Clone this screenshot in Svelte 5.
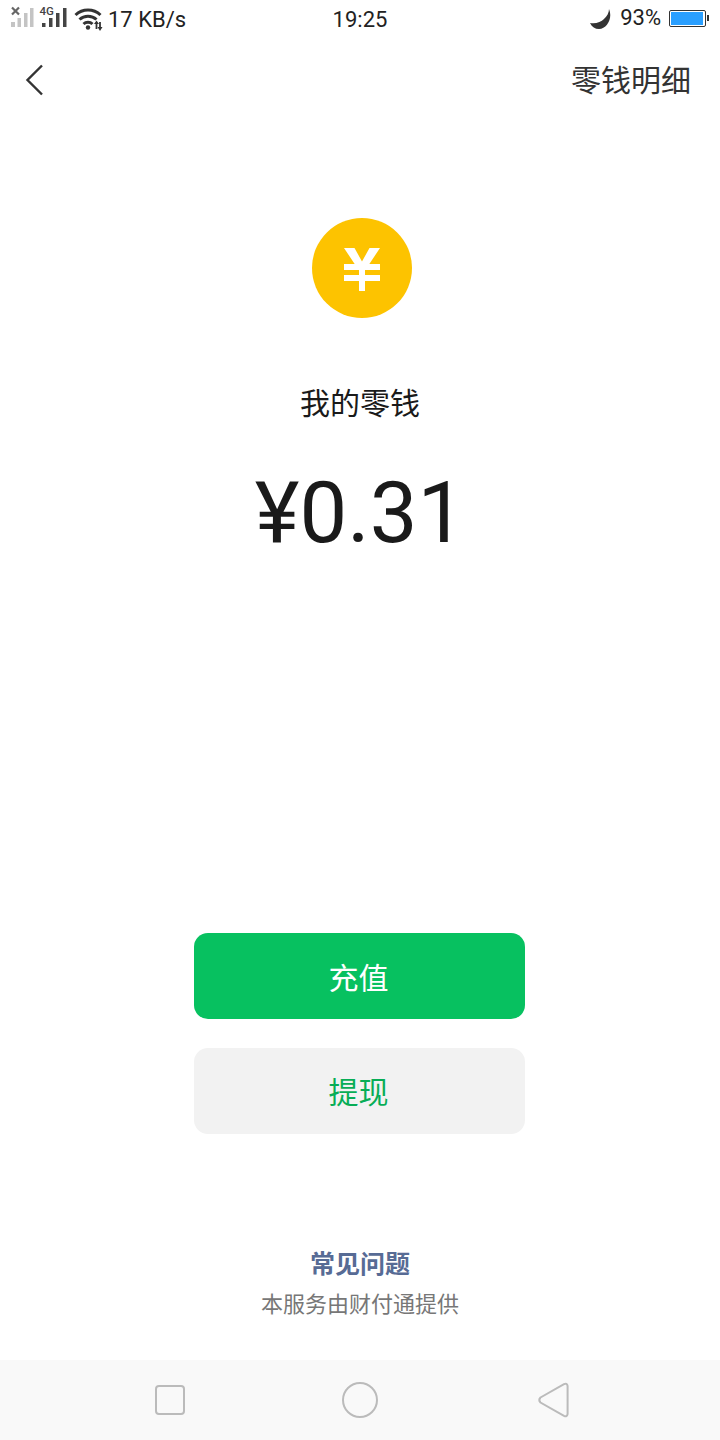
<script lang="ts">
  const faqLabel = "常见问题";
  const provider = "本服务由财付通提供";
</script>

<div class="page">
  <div class="status">
    <div class="status-left">
      <!-- sim 1 (no service), sim 2 (4G), wifi -->
      <svg class="signal" width="95" height="32" viewBox="0 0 95 32">
        <path d="M1 3.500l7 7M8 3.500l-7 7" stroke="#666" stroke-width="2.200" fill="none" />
        <g fill="#c4c4c4">
          <rect x="0" y="18" width="4" height="5" />
          <rect x="6.500" y="14" width="3.500" height="9" />
          <rect x="13" y="9" width="3.500" height="14" />
          <rect x="19" y="4" width="3.500" height="19" />
        </g>
        <text x="28.500" y="11" class="g4">4G</text>
        <g fill="#444">
          <rect x="31" y="19" width="3.500" height="4" />
          <rect x="38" y="14" width="3.500" height="9" />
          <rect x="45" y="9" width="3.500" height="14" />
          <rect x="52" y="4" width="3.500" height="19" />
        </g>
        <g fill="none" stroke="#333" stroke-width="3">
          <path d="M64.500 11a18 18 0 0 1 25 0" />
          <path d="M68.500 15.500a12.500 12.500 0 0 1 17 0" />
          <path d="M72.500 20a6.500 6.500 0 0 1 9 0" />
        </g>
        <circle cx="77" cy="23.500" r="2.200" fill="#333" />
        <path d="M85.500 25v-6M89 18v6" fill="none" stroke="#333" stroke-width="1.800" />
        <path d="M83 20l2.500-3.500 2.500 3.500zM86.500 23h5L89 27z" fill="#333" />
      </svg>
      <span class="speed">17 KB/s</span>
    </div>
    <div class="clock">19:25</div>
    <div class="status-right">
      <svg class="moon" width="22" height="22" viewBox="0 0 22 22">
        <path d="M19 1C23 10 17 21 9 21C5 21 2 19 0 15C6 16 11 14 14 11C17 8 19 5 19 1z" fill="#333" />
      </svg>
      <span class="pct">93%</span>
      <div class="battery"><div class="battery-fill"></div></div>
      <div class="battery-nub"></div>
    </div>
  </div>

  <header class="nav">
    <svg width="20" height="32" viewBox="0 0 20 32"><path d="M17 1.500L2.500 16 17 30.500" fill="none" stroke="#333" stroke-width="2.400" /></svg>
    <span class="detail">零钱明细</span>
  </header>

  <main class="main">
    <div class="coin">
      <svg class="yen" width="36" height="43" viewBox="0 0 36 43" fill="#fff">
        <path d="M0 0h10.500L18 13.500 25.500 0H36L24 18h-12z" />
        <rect x="0" y="16" width="36" height="6" />
        <rect x="0" y="27" width="36" height="6" />
        <rect x="15" y="16" width="6" height="27" />
      </svg>
    </div>
    <div class="label">我的零钱</div>
    <div class="amount">¥0.31</div>
    <button class="btn primary">充值</button>
    <button class="btn secondary">提现</button>
  </main>

  <footer class="foot">
    <div class="faq">{faqLabel}</div>
    <div class="provider">{provider}</div>
  </footer>

  <nav class="navbar">
    <svg width="30" height="30" viewBox="0 0 30 30"><rect x="1" y="1" width="28" height="28" rx="3" fill="none" stroke="#bbb" stroke-width="2" /></svg>
    <svg class="home" width="36" height="36" viewBox="0 0 36 36"><circle cx="18" cy="18" r="17" fill="none" stroke="#bbb" stroke-width="2" /></svg>
    <svg class="back" width="32" height="36" viewBox="0 0 32 36"><path d="M2.500 15.500L26 2.200q3-1.400 3.600 1.800v28q-.6 3.200-3.600 1.800L2.500 20.500q-2.500-2.500 0-5z" fill="none" stroke="#bbb" stroke-width="2" /></svg>
  </nav>
</div>

<style>
  :global(body) {
    margin: 0;
    background: #fff;
  }

  .page {
    width: 720px;
    height: 1440px;
    display: flex;
    flex-direction: column;
    font-family: "Noto Sans CJK SC", "Noto Sans", sans-serif;
    color: #1a1a1a;
  }

  .status {
    height: 38px;
    display: grid;
    grid-template-columns: 1fr auto 1fr;
    align-items: center;
    font-family: Roboto, sans-serif;
    font-size: 22px;
    color: #222;
  }

  .status-left {
    display: flex;
    align-items: center;
    padding-left: 11px;
  }

  .signal {
    margin-top: 2px;
    display: block;
  }

  .g4 {
    font-family: Roboto, sans-serif;
    font-size: 11.500px;
    font-weight: 500;
    fill: #444;
  }

  .speed {
    margin-left: 2px;
  }

  .status-right {
    display: flex;
    align-items: center;
    justify-content: flex-end;
    padding-right: 11px;
  }

  .moon {
    margin-top: -1px;
  }

  .pct {
    margin-left: 8px;
    margin-top: -3px;
  }

  .battery {
    margin-left: 8px;
    margin-top: -2px;
    width: 33px;
    height: 13px;
    padding: 1px;
    border: 1px solid #333;
    border-radius: 2px;
  }

  .battery-fill {
    width: 97%;
    height: 100%;
    background: #2a9fff;
  }

  .battery-nub {
    width: 2px;
    height: 6px;
    margin-left: 1px;
    margin-top: -2px;
    background: #333;
  }

  .nav {
    height: 84px;
    display: flex;
    align-items: center;
    justify-content: space-between;
    padding: 0 29px 0 25px;
  }

  .detail {
    font-size: 30px;
    color: #333;
    margin-top: -5px;
  }

  .main {
    flex: 1;
    display: flex;
    flex-direction: column;
    align-items: center;
    padding-top: 96px;
  }

  .coin {
    width: 100px;
    height: 100px;
    margin-left: 4px;
    border-radius: 50%;
    background: #fdc300;
    display: flex;
    align-items: center;
    justify-content: center;
  }

  .yen {
    margin-top: 2px;
  }

  .label {
    margin-top: 60px;
    font-size: 30px;
    line-height: 46px;
  }

  .amount {
    margin-top: 39px;
    font-family: Roboto, sans-serif;
    font-size: 85px;
    line-height: 100px;
  }

  .btn {
    width: 331px;
    height: 86px;
    margin-right: 1px;
    padding: 0 2px 0 0;
    border: 0;
    border-radius: 14px;
    font-family: inherit;
    font-size: 30px;
  }

  .primary {
    margin-top: 370px;
    background: #07c160;
    color: #fff;
  }

  .secondary {
    margin-top: 29px;
    padding-bottom: 2px;
    background: #f2f2f2;
    color: #07ad56;
  }

  .foot {
    text-align: center;
    padding-bottom: 42px;
  }

  .faq {
    font-size: 25px;
    font-weight: 700;
    color: #576b95;
    line-height: 36px;
  }

  .provider {
    margin-top: 6px;
    font-size: 22px;
    line-height: 32px;
    color: #777;
  }

  .navbar {
    height: 80px;
    background: #f9f9f9;
    display: flex;
    align-items: center;
    padding-left: 155px;
  }

  .home {
    margin-left: 157px;
  }

  .back {
    margin-left: 160px;
  }
</style>
